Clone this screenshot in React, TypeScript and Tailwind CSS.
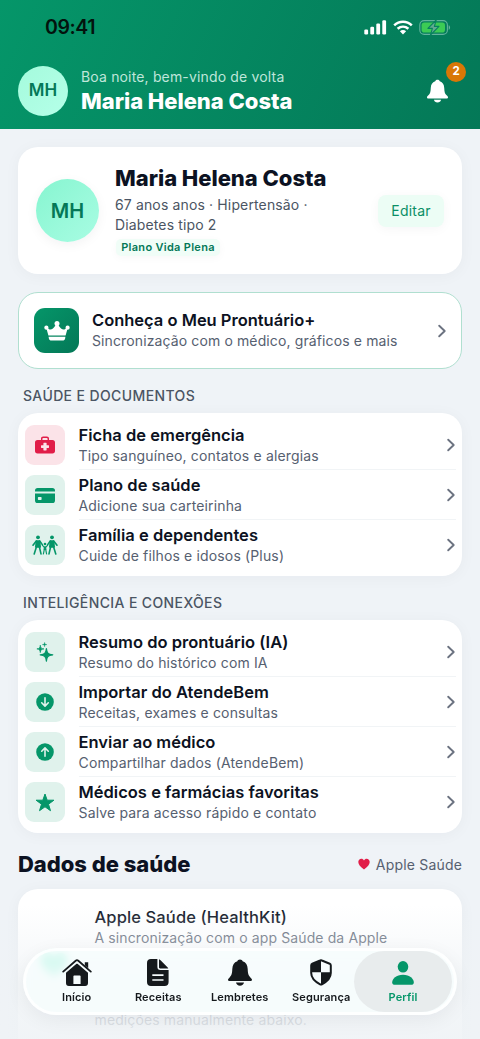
import React from 'react';

type IconProps = { className?: string };

interface RowItem {
  title: string;
  subtitle: string;
  icon: React.ReactNode;
  danger?: boolean;
}

const Chevron = ({ className }: IconProps) => (
  <svg viewBox="0 0 10 16" className={className} fill="none" stroke="currentColor" strokeWidth="1.9" strokeLinecap="round" strokeLinejoin="round">
    <path d="M2.2 2.7 L7.7 8 L2.2 13.3" />
  </svg>
);

const BellIcon = ({ className }: IconProps) => (
  <svg viewBox="0 0 24 27" className={className} fill="currentColor">
    <path d="M12 0.5 C13.4 0.5 14.4 1.2 14.6 2.3 C18 3.3 19.5 6 19.7 10 C19.9 14.5 20.3 16.3 22.4 18.4 C23.3 19.4 24 20 24 20.8 C24 21.6 23.3 22.1 22.3 22.1 H1.7 C0.7 22.1 0 21.6 0 20.8 C0 20 0.7 19.4 1.6 18.4 C3.7 16.3 4.1 14.5 4.3 10 C4.5 6 6 3.3 9.4 2.3 C9.6 1.2 10.6 0.5 12 0.5 Z" />
    <path d="M8 23.5 H16 C15.7 25.5 14.1 26.7 12 26.7 C9.9 26.7 8.3 25.5 8 23.5 Z" />
  </svg>
);

const CrownIcon = ({ className }: IconProps) => (
  <svg viewBox="0 0 26 20" className={className} fill="currentColor">
    <circle cx="13" cy="2.6" r="2.5" />
    <circle cx="2.4" cy="6.7" r="2.1" />
    <circle cx="23.6" cy="6.7" r="2.1" />
    <path d="M2.3 7 L3.4 6.8 C5.5 9.6 8.6 9.3 11.7 4 H14.3 C17.4 9.3 20.5 9.6 22.6 6.8 L23.7 7 L21.6 14.6 H4.4 Z" />
    <path d="M4.6 15.8 H21.4 L21.1 17.5 C20.8 19 20 19.6 18.6 19.6 H7.4 C6 19.6 5.2 19 4.9 17.5 Z" />
  </svg>
);

const MedkitIcon = () => (
  <svg viewBox="0 0 20 18" className="h-[18px] w-5" fill="currentColor">
    <path fillRule="evenodd" d="M6 4 V2.6 C6 1.3 6.9 0.5 8.1 0.5 H11.9 C13.1 0.5 14 1.3 14 2.6 V4 H17.5 C19.1 4 20 4.9 20 6.5 V15 C20 16.6 19.1 17.4 17.5 17.4 H2.5 C0.9 17.4 0 16.6 0 15 V6.5 C0 4.9 0.9 4 2.5 4 Z M7.4 4 H12.6 V2.8 C12.6 2.2 12.3 1.9 11.7 1.9 H8.3 C7.7 1.9 7.4 2.2 7.4 2.8 Z M8.9 6.8 C8.6 6.8 8.4 7 8.4 7.3 V9.3 H6.5 C6.2 9.3 6 9.5 6 9.8 V11.6 C6 11.9 6.2 12.1 6.5 12.1 H8.4 V14.1 C8.4 14.4 8.6 14.6 8.9 14.6 H11.1 C11.4 14.6 11.6 14.4 11.6 14.1 V12.1 H13.5 C13.8 12.1 14 11.9 14 11.6 V9.8 C14 9.5 13.8 9.3 13.5 9.3 H11.6 V7.3 C11.6 7 11.4 6.8 11.1 6.8 Z" />
  </svg>
);

const CardIcon = () => (
  <svg viewBox="0 0 20 15" className="h-[15px] w-5" fill="currentColor">
    <path d="M0 3.5 V2.6 C0 0.9 0.9 0 2.6 0 H17.4 C19.1 0 20 0.9 20 2.6 V3.5 Z" />
    <path fillRule="evenodd" d="M0 5.4 H20 V12.4 C20 14.1 19.1 15 17.4 15 H2.6 C0.9 15 0 14.1 0 12.4 Z M3.6 8.9 C3.1 8.9 2.9 9.2 2.9 9.6 V11.3 C2.9 11.7 3.1 12 3.6 12 H5.9 C6.4 12 6.6 11.7 6.6 11.3 V9.6 C6.6 9.2 6.4 8.9 5.9 8.9 Z" />
  </svg>
);

const FamilyIcon = () => (
  <svg viewBox="0 0 26 20" className="h-5 w-[26px]" fill="none" stroke="currentColor" strokeWidth="1.6" strokeLinecap="round" strokeLinejoin="round">
    <g fill="currentColor">
      <circle cx="6" cy="2.3" r="1.9" stroke="none" />
      <circle cx="20" cy="2.3" r="1.9" stroke="none" />
      <circle cx="13" cy="9" r="1.3" stroke="none" />
      <path d="M4.4 6 H7.6 L8.2 12 H3.8 Z" />
      <path d="M18.4 6 H21.6 L22.2 12 H17.8 Z" />
      <path d="M12.4 12 H13.6 L13.8 14.5 H12.2 Z" strokeWidth="1.2" />
    </g>
    <path d="M4.3 6 L1 10.2 M7.7 6 L10.3 9.6 M4.4 12 L2.2 18.9 M7.4 12 L9 18.9" />
    <path d="M18.3 6 L15.7 9.6 M21.7 6 L25 10.2 M18.6 12 L17 18.9 M21.6 12 L23.8 18.9" />
    <path d="M12.2 12 L10.4 10.4 M13.8 12 L15.6 10.4 M12.3 14.5 L11.4 19 M13.7 14.5 L14.6 19" strokeWidth="1.2" />
  </svg>
);

const SparklesIcon = () => (
  <svg viewBox="0 0 18 20" className="h-5 w-[18px]" fill="currentColor">
    <path d="M10.4 6.6 C10.9 11 11.8 12.2 16.8 12.8 C11.8 13.4 10.9 14.6 10.4 19.2 C9.9 14.6 9 13.4 4.2 12.8 C9 12.2 9.9 11 10.4 6.6 Z" stroke="currentColor" strokeWidth="1.2" strokeLinejoin="round" />
    <path d="M4.3 3.2 C4.6 6 5.2 6.6 7.9 6.9 C5.2 7.2 4.6 7.8 4.3 10.6 C4 7.8 3.4 7.2 0.9 6.9 C3.4 6.6 4 6 4.3 3.2 Z" stroke="currentColor" strokeWidth="0.7" />
    <path d="M8.6 0.3 C8.8 2 9.2 2.4 11 2.6 C9.2 2.8 8.8 3.2 8.6 4.9 C8.4 3.2 8 2.8 6.2 2.6 C8 2.4 8.4 2 8.6 0.3 Z" stroke="currentColor" strokeWidth="0.3" />
  </svg>
);

const ArrowCircleIcon = ({ up }: { up?: boolean }) => (
  <svg viewBox="0 0 18 18" className={up ? 'h-[18px] w-[18px] rotate-180' : 'h-[18px] w-[18px]'}>
    <circle cx="9" cy="9" r="8.8" fill="currentColor" />
    <path d="M9 4.8 V13 M5.7 9.8 L9 13.1 L12.3 9.8" fill="none" stroke="#e0f2ec" strokeWidth="1.6" strokeLinecap="round" strokeLinejoin="round" />
  </svg>
);

const StarIcon = () => (
  <svg viewBox="0 0 20 19" className="h-[19px] w-5" fill="currentColor" stroke="currentColor" strokeWidth="1" strokeLinejoin="round">
    <path d="M10 1 L12.2 7.2 H18.9 L13.5 11.2 L15.5 17.7 L10 13.8 L4.5 17.7 L6.5 11.2 L1.1 7.2 H7.8 Z" />
  </svg>
);

const HomeIcon = () => (
  <svg viewBox="0 0 30 27" className="h-[27px] w-[30px]" fill="currentColor">
    <path d="M1.2 12.6 L13.7 1.7 C14.5 1 15.5 1 16.3 1.7 L28.8 12.6" fill="none" stroke="currentColor" strokeWidth="1.8" strokeLinecap="round" />
    <path d="M22.8 3.2 H26.2 V9.2 L22.8 6.2 Z" />
    <path fillRule="evenodd" d="M4 13.8 L14.2 5 C14.7 4.6 15.3 4.6 15.8 5 L26 13.8 V24 C26 25.9 25 26.9 23.1 26.9 H6.9 C5 26.9 4 25.9 4 24 Z M12.2 16.4 C11.7 16.4 11.4 16.7 11.4 17.2 V25 H18.6 V17.2 C18.6 16.7 18.3 16.4 17.8 16.4 Z" />
  </svg>
);

const DocIcon = () => (
  <svg viewBox="0 0 22 27" className="h-[27px] w-[22px]" fill="currentColor">
    <path fillRule="evenodd" d="M4 0 H10.4 V8 C10.4 10 11.4 10.9 13.3 10.9 H21.6 V23 C21.6 25.7 20.2 27 17.6 27 H4 C1.4 27 0 25.7 0 23 V4 C0 1.3 1.4 0 4 0 Z M5.3 15.3 V16.9 H16.5 V15.3 Z M5.3 20.2 V21.8 H16.5 V20.2 Z" />
    <path d="M12 0.3 C12.7 0.5 13.2 0.9 13.8 1.5 L20.2 7.9 C20.8 8.5 21.1 8.9 21.3 9.4 H13.2 C12.4 9.4 12 9 12 8.2 Z" />
  </svg>
);

const ShieldIcon = () => (
  <svg viewBox="0 0 22 27" className="h-[27px] w-[22px]">
    <path d="M10.1 1.5 Q11 1.1 11.9 1.5 L19.7 4.7 Q20.8 5.2 20.8 6.4 V14 C20.8 19.3 17.5 22.3 11.9 25.3 Q11 25.8 10.1 25.3 C4.5 22.3 1.2 19.3 1.2 14 V6.4 Q1.2 5.2 2.3 4.7 Z" fill="none" stroke="currentColor" strokeWidth="2" />
    <path d="M11 1.2 L1.4 5.3 V13.3 H11 Z" fill="currentColor" />
    <path d="M11 13.3 H20.7 C20.6 19.5 16.5 22.8 11 25.6 Z" fill="currentColor" />
  </svg>
);

const PersonIcon = () => (
  <svg viewBox="0 0 22 24" className="h-6 w-[22px]" fill="currentColor">
    <ellipse cx="11" cy="5.8" rx="5.3" ry="5.8" />
    <path d="M11 13.8 C17.8 13.8 21.8 18 21.8 21.5 C21.8 23 20.8 23.8 19 23.8 H3 C1.2 23.8 0.2 23 0.2 21.5 C0.2 18 4.2 13.8 11 13.8 Z" />
  </svg>
);

const StatusIcons = () => (
  <div className="flex items-center">
    <svg viewBox="0 0 23 15" className="h-[15px] w-[23px]" fill="white">
      <rect x="0.3" y="9.6" width="3.8" height="4.9" rx="1.2" />
      <rect x="6.3" y="6.8" width="3.8" height="7.7" rx="1.2" />
      <rect x="12.3" y="3.5" width="3.8" height="11" rx="1.2" />
      <rect x="18.3" y="0.3" width="3.8" height="14.2" rx="1.2" />
    </svg>
    <svg viewBox="0 0 20 15" className="ml-1.5 h-[15px] w-5" fill="none" stroke="white" strokeWidth="2.5">
      <path d="M1.2 5.3 C6.3 0.4 13.7 0.4 18.8 5.3" />
      <path d="M4.6 8.8 C7.8 5.9 12.2 5.9 15.4 8.8" />
      <path d="M10 14.5 L6.9 11.2 C8.7 9.7 11.3 9.7 13.1 11.2 Z" fill="white" stroke="none" />
    </svg>
    <svg viewBox="0 0 32 17" className="ml-[6px] h-[17px] w-8">
      <rect x="0.8" y="1.6" width="27.6" height="13.8" rx="4.4" fill="none" stroke="#62b39c" strokeWidth="1.1" />
      <rect x="2.6" y="3.4" width="23.4" height="10.2" rx="2.8" fill="#3ccb55" />
      <path d="M29.7 6.2 C31.5 6.8 31.5 10.2 29.7 10.8 Z" fill="#62b39c" />
      <path d="M17.2 1 L8.9 9.4 H13.4 L11.5 16 L20 7.4 H15.4 Z" fill="#62a991" stroke="#07825e" strokeWidth="1.1" strokeLinejoin="round" />
    </svg>
  </div>
);

const healthRows: RowItem[] = [
  { title: 'Ficha de emergência', subtitle: 'Tipo sanguíneo, contatos e alergias', icon: <MedkitIcon />, danger: true },
  { title: 'Plano de saúde', subtitle: 'Adicione sua carteirinha', icon: <CardIcon /> },
  { title: 'Família e dependentes', subtitle: 'Cuide de filhos e idosos (Plus)', icon: <FamilyIcon /> },
];

const connectionRows: RowItem[] = [
  { title: 'Resumo do prontuário (IA)', subtitle: 'Resumo do histórico com IA', icon: <SparklesIcon /> },
  { title: 'Importar do AtendeBem', subtitle: 'Receitas, exames e consultas', icon: <ArrowCircleIcon /> },
  { title: 'Enviar ao médico', subtitle: 'Compartilhar dados (AtendeBem)', icon: <ArrowCircleIcon up /> },
  { title: 'Médicos e farmácias favoritas', subtitle: 'Salve para acesso rápido e contato', icon: <StarIcon /> },
];

const tabs = [
  { label: 'Início', icon: <HomeIcon /> },
  { label: 'Receitas', icon: <DocIcon /> },
  { label: 'Lembretes', icon: <BellIcon className="h-[27px] w-6" /> },
  { label: 'Segurança', icon: <ShieldIcon /> },
  { label: 'Perfil', icon: <PersonIcon />, active: true },
];

const MenuCard = ({ rows }: { rows: RowItem[] }) => (
  <div className="rounded-[20px] bg-white pt-[7px] pb-[5.5px] pl-[7px] shadow-[0_2px_16px_rgba(15,23,42,0.04)]">
    {rows.map((row, i) => (
      <div key={row.title} className="flex h-[50px] items-center">
        <div
          className={`flex h-10 w-10 shrink-0 items-center justify-center rounded-[9px] ${
            row.danger ? 'bg-[#fbe3e8] text-[#e11d48]' : 'bg-[#e0f2ec] text-[#059669]'
          }`}
        >
          {row.icon}
        </div>
        <div
          className={`mr-1.5 ml-[13.5px] flex h-full flex-1 items-center justify-between border-b ${
            i < rows.length - 1 ? 'border-[#f1f4f6]' : 'border-transparent'
          }`}
        >
          <div className="pt-px">
            <div className="text-[16.5px] leading-[21px] font-semibold tracking-[0.02px] text-[#0c1222]">{row.title}</div>
            <div className="text-[14px] leading-5 tracking-[0.15px] text-[#566070]">{row.subtitle}</div>
          </div>
          <Chevron className="h-4 w-2.5 text-[#6b7280]" />
        </div>
      </div>
    ))}
  </div>
);

export default function App() {
  return (
    <div className="relative flex h-[1039px] w-[480px] flex-col overflow-hidden bg-[#eff3f7] font-['Inter',sans-serif]">
      <header className="h-[129px] shrink-0 bg-[linear-gradient(115deg,#059669_0%,#047857_100%)]">
        <div className="flex h-[54px] items-center justify-between pr-[29px] pl-[45px]">
          <span className="text-[19.5px] leading-6 font-semibold tracking-[-0.4px] text-[#03130d]">09:41</span>
          <StatusIcons />
        </div>
        <div className="flex items-center pt-3 pr-[32px] pl-[18px]">
          <div className="flex h-[50px] w-[50px] items-center justify-center rounded-full bg-linear-to-br from-[#a4fbdc] to-[#b5ffe9] text-[17px] font-semibold text-[#047857]">
            MH
          </div>
          <div className="ml-[13px] flex-1">
            <div className="text-[14px] leading-5 tracking-[0.16px] text-[#bfe6da]">Boa noite, bem-vindo de volta</div>
            <div className="text-[22px] leading-7 font-extrabold tracking-[-0.03px] text-white">Maria Helena Costa</div>
          </div>
          <div className="relative text-white">
            <BellIcon className="h-6 w-[21px]" />
            <span className="absolute -top-[17px] left-[19px] flex h-5 w-5 items-center justify-center rounded-full bg-[#d97706] text-[11.5px] font-bold">
              2
            </span>
          </div>
        </div>
      </header>

      <main className="px-[18px] pt-[18px]">
        <section className="flex h-[127px] items-center rounded-[20px] bg-white pr-[18px] pl-[18px] shadow-[0_2px_16px_rgba(15,23,42,0.04)]">
          <div className="flex h-[63px] w-[63px] items-center justify-center rounded-full bg-linear-to-br from-[#86f5d0] to-[#a8fce3] text-[20px] font-semibold text-[#047857] shadow-[0_3px_12px_rgba(15,23,42,0.05)]">
            MH
          </div>
          <div className="ml-4 flex-1">
            <h1 className="-mt-px text-[22px] leading-7 font-extrabold tracking-[-0.03px] text-[#0c1222]">Maria Helena Costa</h1>
            <p className="mt-[3px] text-[14px] leading-5 tracking-[0.14px] text-[#4b5563]">
              67 anos anos · Hipertensão ·<br />
              Diabetes tipo 2
            </p>
            <span className="mt-[4px] ml-px flex h-[17px] w-[104px] items-center justify-center rounded-[5px] bg-[#f0fdf7] text-[11px] font-semibold tracking-[0.3px] text-[#047857] shadow-[0_2px_8px_rgba(15,23,42,0.03)]">
              Plano Vida Plena
            </span>
          </div>
          <button className="h-8 w-[66px] rounded-lg bg-[#ecfdf5] text-[14px] tracking-[0.2px] text-[#0a8f66] shadow-[0_2px_12px_rgba(15,23,42,0.04)]">
            Editar
          </button>
        </section>

        <section className="mt-[18px] flex h-[77px] items-center rounded-[20px] border border-[#b0dfd0] bg-white pr-[14px] pl-[15px]">
          <div className="flex h-[45px] w-[45px] items-center justify-center rounded-[11px] bg-linear-to-br from-[#059669] to-[#047857] text-white">
            <CrownIcon className="h-5 w-[26px]" />
          </div>
          <div className="ml-[13px] flex-1">
            <div className="text-[16.5px] leading-[21px] font-semibold tracking-[-0.01px] text-[#0c1222]">Conheça o Meu Prontuário+</div>
            <div className="text-[14px] leading-5 tracking-[0.12px] text-[#566070]">Sincronização com o médico, gráficos e mais</div>
          </div>
          <Chevron className="h-4 w-2.5 text-[#6b7280]" />
        </section>

        <h2 className="mt-[16.5px] mb-[7.5px] ml-[5px] text-[14px] leading-5 font-medium tracking-[0.38px] text-[#4b5563]">SAÚDE E DOCUMENTOS</h2>
        <MenuCard rows={healthRows} />

        <h2 className="mt-[17.5px] mb-[7px] ml-[5px] text-[14px] leading-5 font-medium tracking-[0.38px] text-[#4b5563]">INTELIGÊNCIA E CONEXÕES</h2>
        <MenuCard rows={connectionRows} />

        <div className="mt-[16.5px] flex h-[30px] items-center justify-between">
          <h2 className="text-[22px] leading-[30px] font-extrabold tracking-[-0.03px] text-[#0c1222]">Dados de saúde</h2>
          <div className="flex items-center text-[14px] tracking-[0.18px] text-[#566070]">
            <svg viewBox="0 0 12 12" className="mr-1.5 h-3 w-3" fill="#e11d48">
              <path d="M6 11.4 C2.4 8.8 0.3 6.5 0.3 4 C0.3 2.1 1.6 0.8 3.3 0.8 C4.5 0.8 5.4 1.4 6 2.5 C6.6 1.4 7.5 0.8 8.7 0.8 C10.4 0.8 11.7 2.1 11.7 4 C11.7 6.5 9.6 8.8 6 11.4 Z" />
            </svg>
            Apple Saúde
          </div>
        </div>

        <section className="mt-[9.5px] flex h-[200px] rounded-[20px] bg-white pt-[17.5px] pl-[22px] shadow-[0_2px_16px_rgba(15,23,42,0.04)]">
          <svg viewBox="0 0 28 26" className="mt-[46px] h-[26px] w-7" fill="#00e6a0">
            <path d="M14 25 C5 18.5 0.5 13.5 0.5 8 C0.5 4 3.5 1 7.3 1 C10 1 12.5 2.5 14 5 C15.5 2.5 18 1 20.7 1 C24.5 1 27.5 4 27.5 8 C27.5 13.5 23 18.5 14 25 Z" />
          </svg>
          <div className="ml-[26.5px]">
            <div className="text-[16.5px] leading-[22px] font-medium tracking-[0.12px] text-[#0c1222]">Apple Saúde (HealthKit)</div>
            <p className="text-[14px] leading-[20.5px] tracking-[0.12px] text-[#566070]">A sincronização com o app Saúde da Apple</p>
            <p className="mt-[61px] text-[14px] leading-[20.5px] tracking-[0.12px] text-[#566070]">medições manualmente abaixo.</p>
          </div>
        </section>
      </main>

      <div className="absolute inset-x-0 bottom-0 h-[134px] bg-linear-to-b from-[#eff3f6]/0 via-[#eff3f6]/75 via-60% to-[#eff3f6]/90" />

      <nav className="absolute top-[948px] left-[23px] flex h-[67px] w-[434px] items-center rounded-full border-[3px] border-white/80 bg-[#f7fefe]/75 px-px shadow-[0_5px_20px_rgba(15,23,42,0.06)] backdrop-blur-[4px]">
        {tabs.map((tab) => (
          <div
            key={tab.label}
            className={`flex h-[61px] shrink-0 flex-col items-center rounded-full ${
              tab.active ? '-ml-2 w-[98px] bg-[#e8eced] text-[#059669]' : 'w-[81.5px] text-[#15191c] first:ml-[9px]'
            }`}
          >
            <div className="mt-[8px] flex h-[27px] items-center">{tab.icon}</div>
            <span className="mt-[2.5px] text-[11px] leading-4 font-semibold tracking-[0.12px]">{tab.label}</span>
          </div>
        ))}
      </nav>
    </div>
  );
}
